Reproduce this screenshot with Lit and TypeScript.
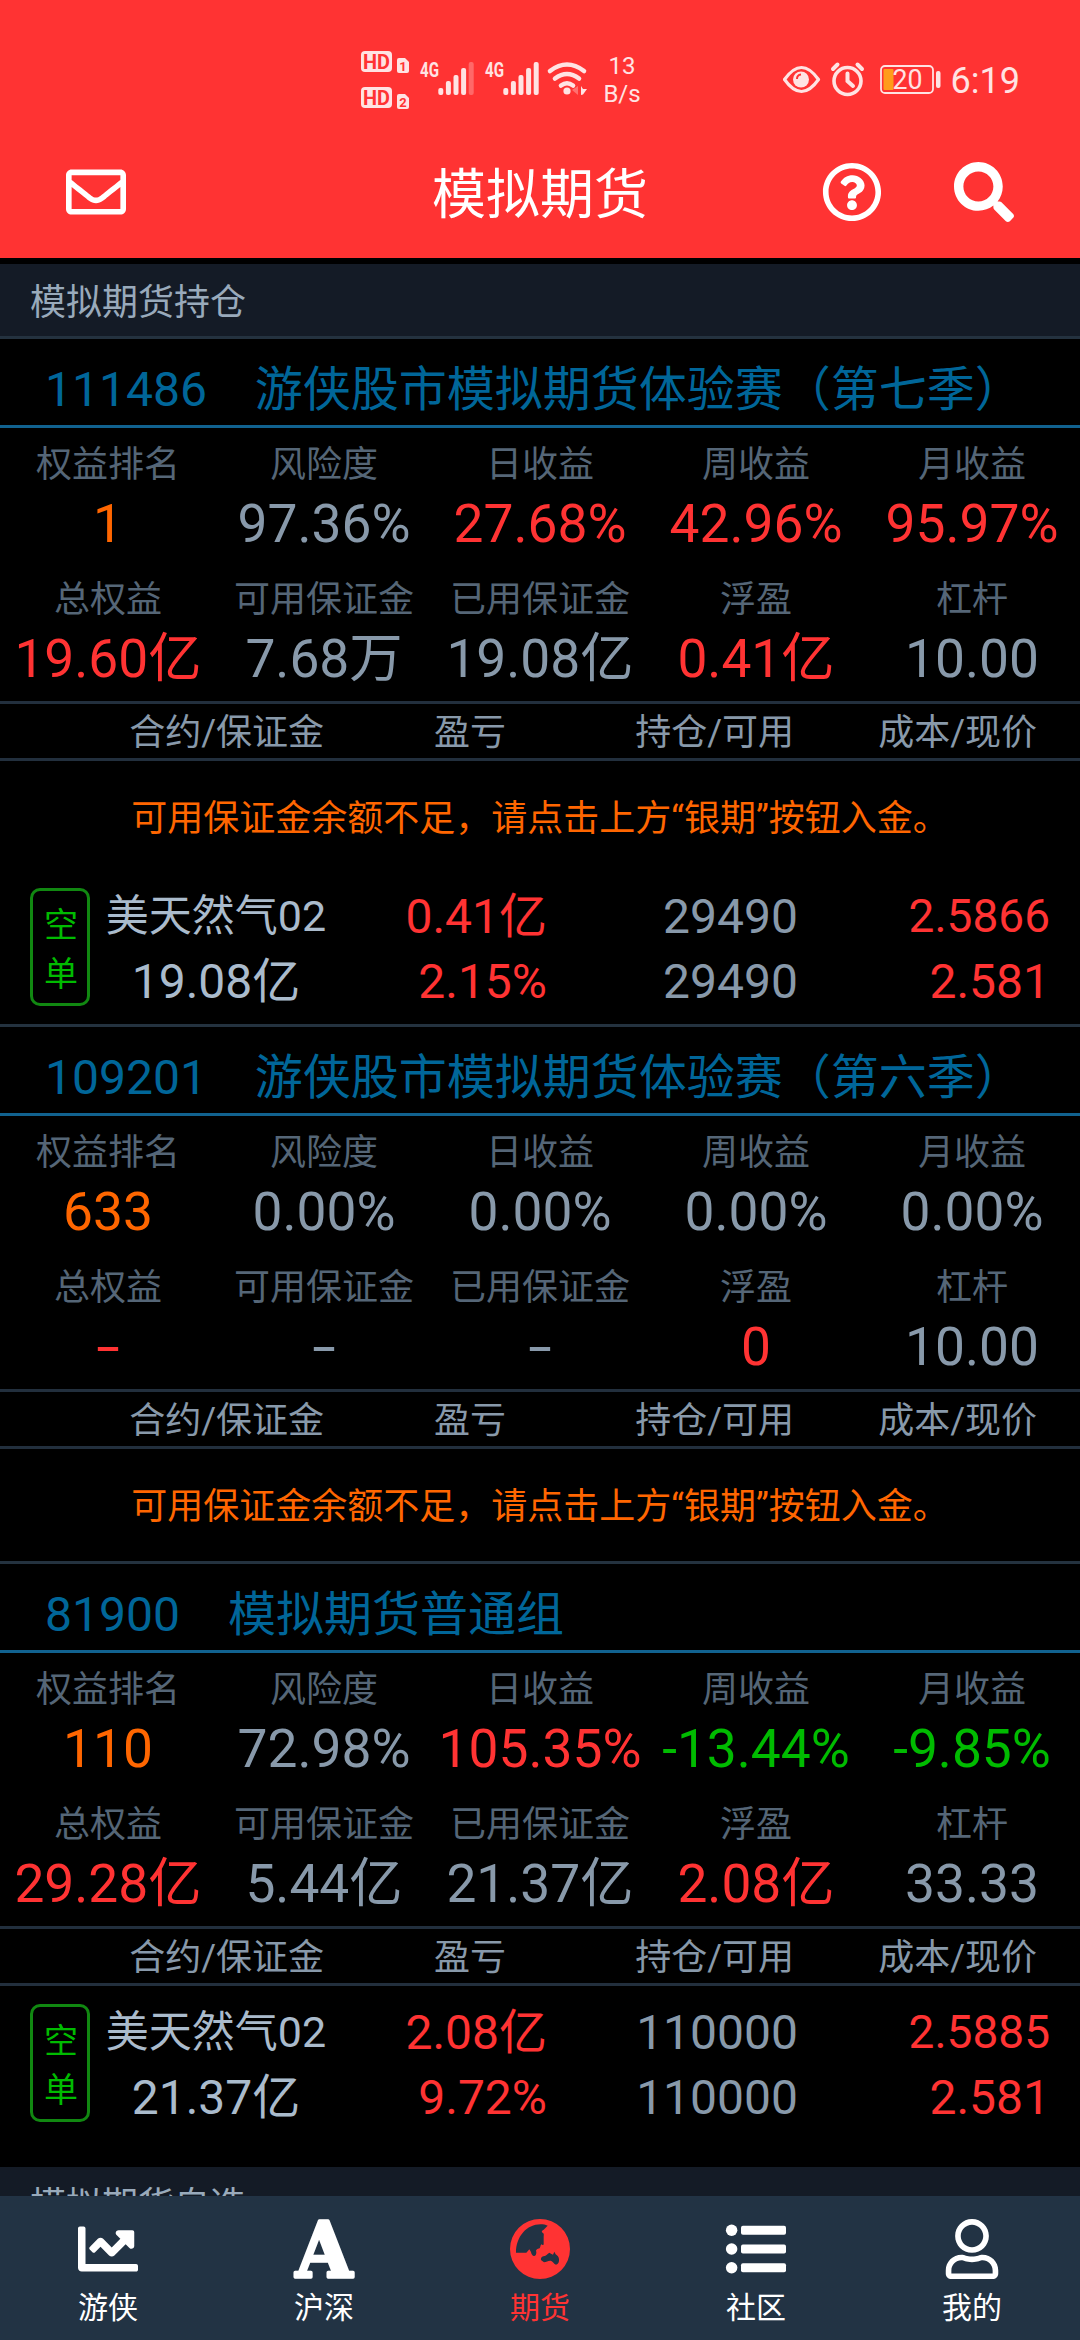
import { LitElement, html, css, svg, nothing } from "lit";
import { customElement, property } from "lit/decorators.js";
import { classMap } from "lit/directives/class-map.js";

type Tone = "plain" | "up" | "down" | "rank";

interface Metric {
  label: string;
  value: string;
  tone: Tone;
}

interface Position {
  side: string;
  name: string;
  margin: string;
  profit: string;
  profitRate: string;
  held: string;
  available: string;
  cost: string;
  price: string;
}

interface Account {
  id: string;
  title: string;
  values: [string, Tone][];
  alert: boolean;
  positions: Position[];
}

const METRIC_LABELS = [
  "权益排名", "风险度", "日收益", "周收益", "月收益",
  "总权益", "可用保证金", "已用保证金", "浮盈", "杠杆",
];

const ALERT_TEXT = "可用保证金余额不足，请点击上方“银期”按钮入金。";

const ACCOUNTS: Account[] = [
  {
    id: "111486",
    title: "游侠股市模拟期货体验赛（第七季）",
    values: [
      ["1", "rank"], ["97.36%", "plain"], ["27.68%", "up"], ["42.96%", "up"], ["95.97%", "up"],
      ["19.60亿", "up"], ["7.68万", "plain"], ["19.08亿", "plain"], ["0.41亿", "up"], ["10.00", "plain"],
    ],
    alert: true,
    positions: [
      {
        side: "空单", name: "美天然气02", margin: "19.08亿", profit: "0.41亿", profitRate: "2.15%",
        held: "29490", available: "29490", cost: "2.5866", price: "2.581",
      },
    ],
  },
  {
    id: "109201",
    title: "游侠股市模拟期货体验赛（第六季）",
    values: [
      ["633", "rank"], ["0.00%", "plain"], ["0.00%", "plain"], ["0.00%", "plain"], ["0.00%", "plain"],
      ["-", "up"], ["-", "plain"], ["-", "plain"], ["0", "up"], ["10.00", "plain"],
    ],
    alert: true,
    positions: [],
  },
  {
    id: "81900",
    title: "模拟期货普通组",
    values: [
      ["110", "rank"], ["72.98%", "plain"], ["105.35%", "up"], ["-13.44%", "down"], ["-9.85%", "down"],
      ["29.28亿", "up"], ["5.44亿", "plain"], ["21.37亿", "plain"], ["2.08亿", "up"], ["33.33", "plain"],
    ],
    alert: false,
    positions: [
      {
        side: "空单", name: "美天然气02", margin: "21.37亿", profit: "2.08亿", profitRate: "9.72%",
        held: "110000", available: "110000", cost: "2.5885", price: "2.581",
      },
    ],
  },
];

const ICONS = {
  envelope: svg`<path d="M464 64H48C21.49 64 0 85.49 0 112v288c0 26.51 21.49 48 48 48h416c26.51 0 48-21.49 48-48V112c0-26.51-21.49-48-48-48zm0 48v40.805c-22.422 18.259-58.168 46.651-134.587 106.49-16.841 13.247-50.201 45.072-73.413 44.701-23.208.375-56.579-31.459-73.413-44.701C106.18 199.465 70.425 171.067 48 152.805V112h416zM48 400V214.398c22.914 18.251 55.409 43.862 104.938 82.646 21.857 17.205 60.134 55.186 103.062 54.955 42.717.231 80.509-37.199 103.053-54.947 49.528-38.783 82.032-64.401 104.947-82.653V400H48z"/>`,
  help: svg`<path d="M256 8C119.043 8 8 119.083 8 256c0 136.997 111.043 248 248 248s248-111.003 248-248C504 119.083 392.957 8 256 8zm0 448c-110.532 0-200-89.431-200-200 0-110.495 89.472-200 200-200 110.491 0 200 89.471 200 200 0 110.53-89.431 200-200 200zm107.244-255.2c0 67.052-72.421 68.084-72.421 92.863V300c0 6.627-5.373 12-12 12h-45.647c-6.627 0-12-5.373-12-12v-8.659c0-35.745 27.1-50.034 47.579-61.516 17.561-9.845 28.324-16.541 28.324-29.579 0-17.246-21.999-28.693-39.784-28.693-23.189 0-33.894 10.977-48.942 29.969-4.057 5.12-11.46 6.071-16.666 2.124l-27.824-21.098c-5.107-3.872-6.251-11.066-2.644-16.363C184.846 131.491 214.94 112 261.794 112c49.071 0 101.45 38.304 101.45 88.8zM298 368c0 23.159-18.841 42-42 42s-42-18.841-42-42 18.841-42 42-42 42 18.841 42 42z"/>`,
  search: svg`<path d="M505 442.7L405.3 343c-4.5-4.5-10.6-7-17-7H372c27.6-35.3 44-79.7 44-128C416 93.1 322.9 0 208 0S0 93.1 0 208s93.1 208 208 208c48.3 0 92.7-16.4 128-44v16.3c0 6.4 2.5 12.5 7 17l99.7 99.7c9.4 9.4 24.6 9.4 33.9 0l28.3-28.3c9.4-9.4 9.4-24.6.1-34zM208 336c-70.7 0-128-57.2-128-128 0-70.7 57.2-128 128-128 70.7 0 128 57.2 128 128 0 70.7-57.2 128-128 128z"/>`,
  chart: svg`<path d="M496 384H64V80c0-8.84-7.16-16-16-16H16C7.16 64 0 71.16 0 80v336c0 17.67 14.33 32 32 32h464c8.84 0 16-7.16 16-16v-32c0-8.84-7.16-16-16-16zM464 96H345.94c-21.38 0-32.09 25.85-16.97 40.97l32.4 32.4L288 242.75l-73.37-73.37c-12.5-12.5-32.76-12.5-45.25 0l-68.69 68.69c-6.25 6.25-6.25 16.38 0 22.63l22.62 22.62c6.25 6.25 16.38 6.25 22.63 0L192 237.25l73.37 73.37c12.5 12.5 32.76 12.5 45.25 0l96-96 32.4 32.4c15.12 15.12 40.97 4.41 40.97-16.97V112c.01-8.84-7.15-16-15.99-16z"/>`,
  letter: svg`<text x="256" y="497" text-anchor="middle" textLength="482" lengthAdjust="spacingAndGlyphs" font-family="DejaVu Serif, serif" font-weight="700" font-size="661" stroke="currentColor" stroke-width="30" stroke-linejoin="round">A</text>`,
  globe: svg`<g transform="scale(2.8444) translate(-30 -27)"><path fill-rule="evenodd" d="M120 27a90 90 0 1 1 0 180a90 90 0 1 1 0-180z M48 128C48 80 80 43 122 43C130 43 136 44 143 47L131 59C125 62 123 65 129 69C133 72 131 76 131 80V102C131 106 127 106 124 103C121 106 122 110 119 115C112 117 106 119 109 126C109 134 106 139 101 138C97 136 94 132 93 126L88 118L79 128Z M123 150C122 145 124 141 130 139C136 138 140 135 143 132L148 128L153 131L159 134L163 125L167 133C172 137 177 141 177 148C178 155 175 163 168 164C161 163 161 156 154 153C146 151 140 156 132 157Z"/></g>`,
  list: svg`<circle cx="48" cy="96" r="49"/><circle cx="48" cy="256" r="49"/><circle cx="48" cy="416" r="49"/><rect x="128" y="58" width="384" height="76" rx="16"/><rect x="128" y="218" width="384" height="76" rx="16"/><rect x="128" y="378" width="384" height="76" rx="16"/>`,
  user: svg`<path transform="translate(32 0)" d="M313.6 304c-28.7 0-42.5 16-89.6 16-47.1 0-60.8-16-89.6-16C60.2 304 0 364.2 0 438.4V464c0 26.5 21.5 48 48 48h352c26.5 0 48-21.5 48-48v-25.6c0-74.2-60.2-134.4-134.4-134.4zM400 464H48v-25.6c0-47.6 38.8-86.4 86.4-86.4 14.6 0 38.3 16 89.6 16 51.7 0 74.9-16 89.6-16 47.6 0 86.4 38.8 86.4 86.4V464zM224 288c79.5 0 144-64.5 144-144S303.5 0 224 0 80 64.5 80 144s64.5 144 144 144zm0-240c52.9 0 96 43.1 96 96s-43.1 96-96 96-96-43.1-96-96 43.1-96 96-96z"/>`,
};

type IconName = keyof typeof ICONS;

@customElement("ui-icon")
class UiIcon extends LitElement {
  @property() name: IconName = "list";
  static styles = css`
    :host { display: block; width: 60px; height: 60px; }
    .icon { display: block; width: 60px; height: 60px; fill: currentColor; overflow: visible; }
  `;
  render() {
    return html`<svg class="icon" viewBox="0 0 512 512">${ICONS[this.name]}</svg>`;
  }
}

@customElement("status-bar")
class StatusBar extends LitElement {
  static styles = css`
    :host { display: flex; height: 134px; padding: 48px 56px 0 358px; box-sizing: border-box;
      justify-content: space-between; color: #ffe3e3; font-family: Roboto, sans-serif; }
    .left { display: flex; }
    .speed { width: 60px; margin-left: 2px; padding-top: 4px; text-align: center; font-size: 24px; line-height: 28px; }
    svg { display: block; fill: currentColor; }
    .hd { font: 700 21px Roboto, sans-serif; fill: #ff3333; }
    .sim { font: 700 13px Roboto, sans-serif; fill: #ff3333; }
    .net { font: 700 20px Roboto, sans-serif; }
    .level { font: 400 27px Roboto, sans-serif; }
    .clock { font: 400 36px Roboto, sans-serif; }
  `;

  private hd(y: number, n: string) {
    return svg`
      <rect x="3" y=${y} width="31" height="21" rx="4"/>
      <text class="hd" x="5" y=${y + 18} textLength="27" lengthAdjust="spacingAndGlyphs">HD</text>
      <path d=${`M39 ${y + 9}q0-2 2-2h6l4 4v9q0 2-2 2h-8q-2 0-2-2z`}/>
      <text class="sim" x="45" y=${y + 19.5} text-anchor="middle">${n}</text>`;
  }

  private signal(x: number, faded: boolean) {
    return svg`
      <text class="net" x=${x} y="29" textLength="19" lengthAdjust="spacingAndGlyphs">4G</text>
      ${[7, 14, 20, 27, 33].map((h, i) => svg`
        <rect x=${x + 18.3 + i * 7.6} y=${47 - h} width="5" height=${h} rx="2" opacity=${faded && i === 4 ? 0.3 : 1}/>`)}`;
  }

  render() {
    return html`
      <div class="left">
        <svg width="232" height="64" viewBox="0 0 232 64">
          ${this.hd(3, "1")}${this.hd(39, "2")}
          ${this.signal(62, true)}${this.signal(127, false)}
          <g fill="none" stroke="currentColor" stroke-width="4.6" stroke-linecap="round">
            <path d="M192 23q17-13 34 0"/><path d="M197 30.500q12-9 24 0"/><path d="M203 37.500q6-4.500 12 0"/>
          </g>
          <circle cx="209" cy="43" r="3.600"/>
          <path d="M220 38v9l-6-5z" opacity=".35"/>
          <path d="M223 38v9l2-.5 4-5.500h-4z"/>
        </svg>
        <div class="speed">13<br>B/s</div>
      </div>
      <svg width="241" height="64" viewBox="783 48 241 64">
        <path d="M784.500 79.500q17-24 34 0q-17 24-34 0z" fill="none" stroke="currentColor" stroke-width="3.200" stroke-linejoin="round"/>
        <circle cx="801" cy="79.500" r="8"/>
        <path d="M797 79a4.500 4.500 0 0 1 4-4.500" fill="none" stroke="#ff3333" stroke-width="2"/>
        <g fill="none" stroke="currentColor" stroke-width="4" stroke-linecap="round">
          <circle cx="847.500" cy="81" r="13.500" stroke-width="3.600"/>
          <path d="M847.500 73.500v7.500l5.500 5"/><path d="M833 69l4.500-4.500M862 69l-4.500-4.500"/>
        </g>
        <rect x="881" y="66" width="52" height="27" rx="4" fill="none" stroke="currentColor" stroke-width="1.800"/>
        <rect x="883.500" y="69" width="10" height="21" rx="1" fill="#ff9c1a"/>
        <rect x="936" y="71" width="4.500" height="17" rx="2"/>
        <text class="level" x="892.500" y="89" textLength="30" lengthAdjust="spacingAndGlyphs">20</text>
        <text class="clock" x="950.500" y="93">6:19</text>
      </svg>`;
  }
}

@customElement("account-card")
class AccountCard extends LitElement {
  @property({ attribute: false }) account!: Account;

  static styles = css`
    :host { display: block; border-top: 3px solid #24323f; }
    :host(:first-of-type) { border-top: 0; }
    .title { display: flex; gap: 48px; height: 86px; line-height: 101px; padding-left: 45px;
      border-bottom: 3px solid #11628f; color: #006699; font-size: 48px; white-space: nowrap; overflow: hidden; }
    .metrics { display: grid; grid-template-columns: repeat(5, 216px); grid-auto-rows: 135px; height: 273px; text-align: center; white-space: nowrap; }
    .metric { padding-top: 10px; }
    .label { height: 54px; line-height: 54px; font-size: 36px; color: #556677; }
    .value { height: 64px; line-height: 64px; font-size: 53.3px; display: flex; justify-content: center; color: #8899aa; }
    .up { color: #ff3333; }
    .down { color: #00bb00; }
    .rank { color: #ff6600; }
    .empty { transform: scaleX(1.6); }
    .columns { display: grid; grid-template-columns: 324px 182px 288px 243px; height: 54px; line-height: 59px;
      border: solid #222f3d; border-width: 3px 0; font-size: 36px; color: #8899aa; text-align: right; }
    .alert { height: 112px; line-height: 117px; text-align: center; font-size: 36px; color: #ff6600; white-space: nowrap; }
    .position { display: grid; grid-template-columns: 60px 252px 205px 251px 252px; height: 151px;
      box-sizing: border-box; padding: 15px 30px 0; font-size: 48px; line-height: 65px; color: #8899aa; }
    .unalerted { margin-top: 3px; }
    .side { width: 60px; height: 118px; box-sizing: border-box; padding: 10px 11px 0; border: 3px solid #118811;
      border-radius: 10px; color: #00bb00; font-size: 34px; line-height: 49px; text-align: center; word-break: break-all; }
    .cell { display: flex; flex-direction: column; align-items: flex-end; margin-top: -4px; white-space: nowrap; }
    .contract { align-items: center; color: #aabbcc; }
    .name { font-size: 43px; }
    .cost { font-size: 46px; }
  `;

  private get metrics(): Metric[] {
    return this.account.values.map(([value, tone], i) => ({ label: METRIC_LABELS[i], value, tone }));
  }

  private position(p: Position) {
    return html`
      <div class=${classMap({ position: true, unalerted: !this.account.alert })}>
        <div class="side">${p.side}</div>
        <div class="cell contract"><span class="name">${p.name}</span><span>${p.margin}</span></div>
        <div class="cell up"><span>${p.profit}</span><span>${p.profitRate}</span></div>
        <div class="cell"><span>${p.held}</span><span>${p.available}</span></div>
        <div class="cell up"><span class="cost">${p.cost}</span><span>${p.price}</span></div>
      </div>`;
  }

  render() {
    const a = this.account;
    return html`
      <div class="title"><span>${a.id}</span><span>${a.title}</span></div>
      <div class="metrics">
        ${this.metrics.map((m) => html`
          <div class="metric">
            <div class="label">${m.label}</div>
            <div class=${classMap({ value: true, [m.tone]: true, empty: m.value === "-" })}>${m.value}</div>
          </div>`)}
      </div>
      <div class="columns"><span>合约/保证金</span><span>盈亏</span><span>持仓/可用</span><span>成本/现价</span></div>
      ${a.alert ? html`<div class="alert">${ALERT_TEXT}</div>` : nothing}
      ${a.positions.map((p) => this.position(p))}`;
  }
}

@customElement("tab-bar")
class TabBar extends LitElement {
  static styles = css`
    :host { display: grid; grid-template-columns: repeat(5, 1fr); height: 144px; background: #223344; color: #fff; }
    .tab { display: flex; flex-direction: column; align-items: center; padding-top: 23px; }
    .active { color: #ff3333; }
    .text { height: 56px; line-height: 58px; font-size: 30px; }
  `;
  private tabs: { icon: IconName; text: string; active?: boolean }[] = [
    { icon: "chart", text: "游侠" },
    { icon: "letter", text: "沪深" },
    { icon: "globe", text: "期货", active: true },
    { icon: "list", text: "社区" },
    { icon: "user", text: "我的" },
  ];
  render() {
    return this.tabs.map((t) => html`
      <div class=${classMap({ tab: true, active: !!t.active })}>
        <ui-icon .name=${t.icon}></ui-icon>
        <span class="text">${t.text}</span>
      </div>`);
  }
}

@customElement("app-root")
class AppRoot extends LitElement {
  static styles = css`
    :host { display: flex; flex-direction: column; width: 1080px; height: 2340px; overflow: hidden;
      background: #000; font-family: Roboto, "Noto Sans CJK SC", sans-serif; }
    .top { height: 258px; background: #ff3333; color: #fff; }
    .bar { display: grid; grid-template-columns: 60px 1fr 60px 60px; column-gap: 72px; padding: 0 66px; align-items: center; height: 115px; }
    .heading { margin: 9px 0 0; padding-left: 132px; text-align: center; font-size: 54px; line-height: 80px; font-weight: 400; }
    .body { flex: 1; min-height: 0; overflow: hidden; padding-top: 6px; }
    .section { height: 72px; line-height: 78px; padding-left: 30px; border-bottom: 3px solid #24323f;
      background: #141b26; color: #99aabb; font-size: 36px; }
    .watchlist { margin-top: 27px; }
  `;
  render() {
    return html`
      <div class="top">
        <status-bar></status-bar>
        <div class="bar">
          <ui-icon .name=${"envelope"}></ui-icon>
          <h1 class="heading">模拟期货</h1>
          <ui-icon .name=${"help"}></ui-icon>
          <ui-icon .name=${"search"}></ui-icon>
        </div>
      </div>
      <div class="body">
        <div class="section">模拟期货持仓</div>
        ${ACCOUNTS.map((a) => html`<account-card .account=${a}></account-card>`)}
        <div class="section watchlist">模拟期货自选</div>
      </div>
      <tab-bar></tab-bar>`;
  }
}
